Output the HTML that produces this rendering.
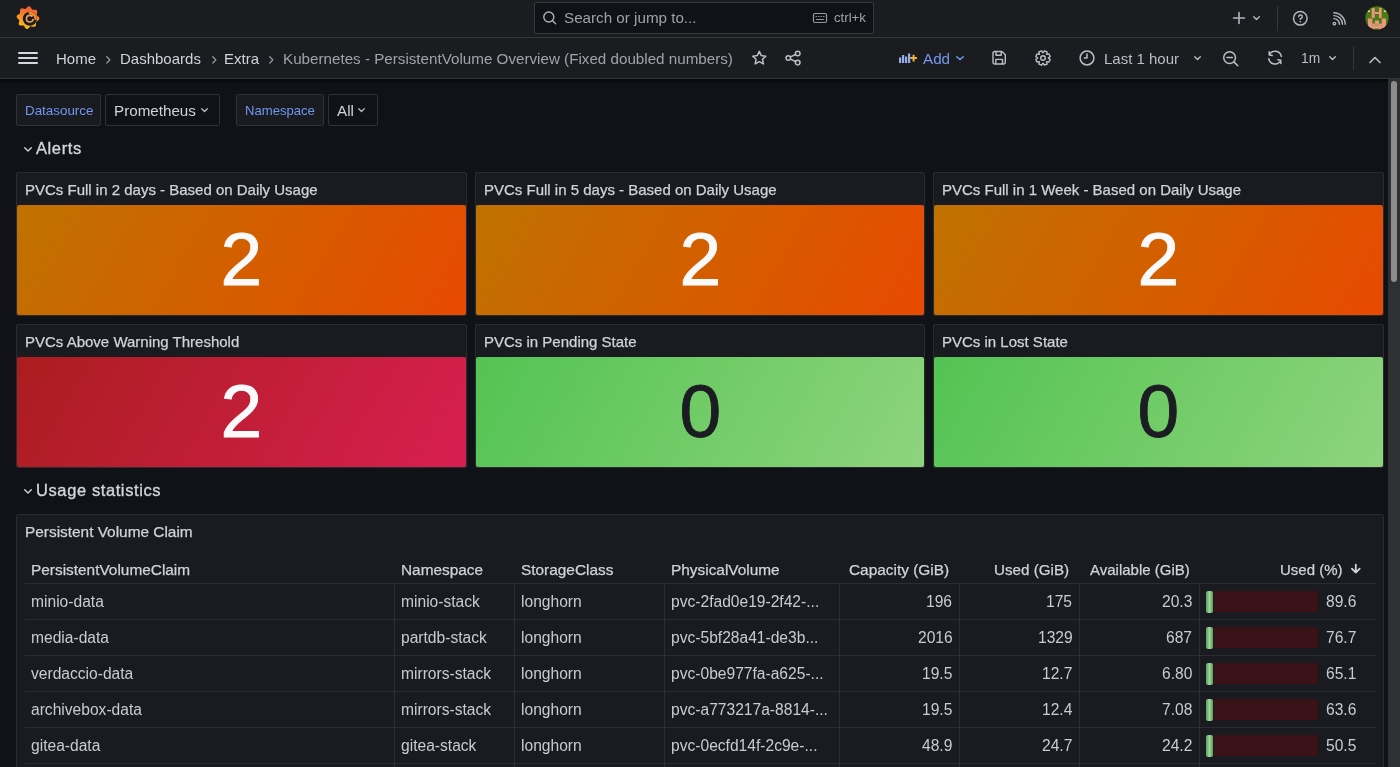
<!DOCTYPE html>
<html><head><meta charset="utf-8"><title>Kubernetes - PersistentVolume Overview</title><style>
*{box-sizing:border-box;margin:0;padding:0}
html,body{width:1400px;height:767px;overflow:hidden;background:#111217;font-family:"Liberation Sans",sans-serif;color:#ccccdc}
.a{position:absolute}
.t{position:absolute;white-space:nowrap;line-height:1;will-change:transform}
svg{position:absolute;overflow:visible}
.s{fill:none;stroke:#bdbdc7;stroke-width:1.5;stroke-linecap:round;stroke-linejoin:round}
.box{position:absolute;border:1px solid #2f3136;border-radius:2px}
.panel{position:absolute;background:#1a1b20;border:1px solid #2a2c31;border-radius:2px}
.hl{position:absolute;height:1px;background:#2a2d32}
.vl{position:absolute;width:1px;background:#2a2d32}
</style></head><body>
<div class="a" style="left:0;top:0;width:1400px;height:38px;background:#1a1c20;border-bottom:1px solid #34363b"></div>
<div class="a" style="left:0;top:38px;width:1400px;height:41px;background:#1a1c20;border-bottom:1px solid #34363b"></div>
<div class="a" style="left:0;top:79px;width:1400px;height:5px;background:linear-gradient(to bottom,#030408,#0a0b0f 40%,#111217)"></div>
<svg style="left:16px;top:5px" width="25" height="26" viewBox="0 0 25 26">
<defs><linearGradient id="lg" x1="0.1" y1="1" x2="0.3" y2="0"><stop offset="0" stop-color="#fcc419"/><stop offset="0.5" stop-color="#f8951f"/><stop offset="1" stop-color="#f15c34"/></linearGradient></defs>
<path fill="url(#lg)" d="M23.10 12.60 L23.35 13.19 L23.39 13.80 L23.19 14.37 L22.80 14.89 L22.25 15.35 L21.64 15.73 L21.04 16.07 L20.54 16.40 L20.17 16.76 L19.95 17.19 L19.88 17.72 L19.90 18.34 L19.94 19.03 L19.95 19.76 L19.85 20.45 L19.61 21.05 L19.21 21.50 L18.66 21.77 L18.01 21.86 L17.31 21.79 L16.60 21.63 L15.94 21.45 L15.35 21.32 L14.83 21.32 L14.38 21.47 L13.95 21.79 L13.53 22.24 L13.07 22.77 L12.56 23.28 L12.00 23.70 L11.41 23.95 L10.80 23.99 L10.23 23.79 L9.71 23.40 L9.25 22.85 L8.87 22.24 L8.53 21.64 L8.20 21.14 L7.84 20.77 L7.41 20.55 L6.88 20.48 L6.26 20.50 L5.57 20.54 L4.84 20.55 L4.15 20.45 L3.55 20.21 L3.10 19.81 L2.83 19.26 L2.74 18.61 L2.81 17.91 L2.97 17.20 L3.15 16.54 L3.28 15.95 L3.28 15.43 L3.13 14.98 L2.81 14.55 L2.36 14.13 L1.83 13.67 L1.32 13.16 L0.90 12.60 L0.65 12.01 L0.61 11.40 L0.81 10.83 L1.20 10.31 L1.75 9.85 L2.36 9.47 L2.96 9.13 L3.46 8.80 L3.83 8.44 L4.05 8.01 L4.12 7.48 L4.10 6.86 L4.06 6.17 L4.05 5.44 L4.15 4.75 L4.39 4.15 L4.79 3.70 L5.34 3.43 L5.99 3.34 L6.69 3.41 L7.40 3.57 L8.06 3.75 L8.65 3.88 L9.17 3.88 L9.62 3.73 L10.05 3.41 L10.47 2.96 L10.93 2.43 L11.44 1.92 L12.00 1.50 L12.59 1.25 L13.20 1.21 L13.77 1.41 L14.29 1.80 L14.75 2.35 L15.13 2.96 L15.47 3.56 L15.80 4.06 L16.16 4.43 L16.59 4.65 L17.12 4.72 L17.74 4.70 L18.43 4.66 L19.16 4.65 L19.85 4.75 L20.45 4.99 L20.90 5.39 L21.17 5.94 L21.26 6.59 L21.19 7.29 L21.03 8.00 L20.85 8.66 L20.72 9.25 L20.72 9.77 L20.87 10.22 L21.19 10.65 L21.64 11.07 L22.17 11.53 L22.68 12.04 Z"/>
<circle cx="13.8" cy="13.7" r="7" fill="#1a1c20"/>
<path fill="none" stroke="#f4872a" stroke-width="2.6" d="M13.8 8.1 A5.6 5.6 0 0 1 19.4 13.7" stroke-linecap="round"/>
<circle cx="13.8" cy="13.7" r="4.1" fill="#e9a06e"/>
<circle cx="13.8" cy="13.7" r="2.5" fill="#1a1c20"/>
<path fill="#1a1c20" d="M13.8 13.7 L17.5 10.8 L18.5 13.9 Z"/>
</svg>
<div class="box" style="left:534px;top:2px;width:340px;height:32px;background:#111217;border-color:#36383d"></div>
<svg style="left:542px;top:10px" width="16" height="16" viewBox="0 0 16 16"><circle class="s" cx="6.8" cy="7" r="5" style="stroke:#aeaeb8;stroke-width:1.4"/><path class="s" d="M10.6 10.8 L13.6 13.8" style="stroke:#aeaeb8;stroke-width:1.4"/></svg>
<div class="t" style="left:563.50px;top:10.13px;font-size:15.20px;color:#9fa0aa;">Search or jump to...</div>
<svg style="left:812px;top:12px" width="16" height="12" viewBox="0 0 16 12"><rect class="s" x="1.5" y="1.5" width="13" height="9" rx="1.5" style="stroke:#96969f;stroke-width:1.2"/><path class="s" d="M4 4.5h.6M6.5 4.5h.6M9 4.5h.6M11.5 4.5h.6M4.5 7.5h7" style="stroke:#96969f;stroke-width:1.1"/></svg>
<div class="t" style="left:833.50px;top:10.83px;font-size:13.20px;color:#9fa0aa;">ctrl+k</div>
<svg style="left:1233px;top:12px" width="12" height="12" viewBox="0 0 12 12"><path class="s" d="M6 0.5v11M0.5 6h11" style="stroke:#b4b4be;stroke-width:1.6"/></svg>
<svg style="left:1252.5px;top:16.0px" width="7" height="4" viewBox="0 0 7 4"><path class="s" d="M0.7 0.7 L3.50 3.50 L6.30 0.7" style="stroke:#b4b4be;stroke-width:1.4"/></svg>
<div class="a" style="left:1277px;top:6px;width:1px;height:25px;background:#35373c"></div>
<svg style="left:1291.5px;top:9.6px" width="17" height="17" viewBox="0 0 17 17"><circle class="s" cx="8.3" cy="8.3" r="6.8" style="stroke:#b4b4be"/><path class="s" d="M6.6 6.7 A1.8 1.8 0 1 1 8.3 8.6 V9.4" style="stroke:#b4b4be;stroke-width:1.4"/><circle cx="8.3" cy="11.6" r="0.85" fill="#b4b4be"/></svg>
<svg style="left:1332px;top:12px" width="14" height="14" viewBox="0 0 14 14"><path class="s" d="M1.8 6.6 A5.6 5.6 0 0 1 7.4 12.2M1.8 3.6 A8.6 8.6 0 0 1 10.4 12.2M1.8 0.8 A11.4 11.4 0 0 1 13.2 12.2" style="stroke:#b4b4be;stroke-width:1.4"/><circle class="s" cx="2.4" cy="11.6" r="1.3" style="stroke:#b4b4be;stroke-width:1.3"/></svg>
<svg style="left:1365px;top:6px" width="24" height="24" viewBox="0 0 24 24">
<defs><clipPath id="av"><circle cx="12" cy="12" r="11.7"/></clipPath></defs>
<g clip-path="url(#av)"><rect width="24" height="24" fill="#4d7a12"/>
<g fill="#ea9680">
<rect x="6.7" y="2" width="3" height="10"/><rect x="14" y="2" width="2.6" height="10"/><rect x="9.7" y="6" width="4.3" height="2"/>
<rect x="3" y="12.5" width="4.3" height="10"/><rect x="16.7" y="12.5" width="4.3" height="10"/>
<rect x="7.3" y="17.5" width="2.6" height="6"/><rect x="14" y="17.5" width="2.7" height="6"/>
<rect x="9.9" y="14.5" width="4.1" height="2.5"/><rect x="9.9" y="19.5" width="4.1" height="3"/>
</g>
<g fill="#b6a070"><rect x="9.9" y="17" width="4.1" height="2.5"/></g>
<g fill="#d6e6b8"><rect x="3" y="4.5" width="2" height="1.5"/><rect x="19" y="4.5" width="2" height="1.5"/></g>
</g></svg>
<div class="a" style="left:18px;top:52px;width:20px;height:2px;background:#d6d6de;border-radius:1px"></div>
<div class="a" style="left:18px;top:57px;width:20px;height:2px;background:#d6d6de;border-radius:1px"></div>
<div class="a" style="left:18px;top:62px;width:20px;height:2px;background:#d6d6de;border-radius:1px"></div>
<div class="t" style="left:55.50px;top:51.30px;font-size:15.00px;color:#d2d2da;">Home</div>
<svg style="left:105.5px;top:56.0px" width="6" height="9" viewBox="0 0 6 9"><path class="s" d="M0.8 0.8 L3.9 3.9 L0.8 7" style="stroke:#9b9ba5;stroke-width:1.3"/></svg>
<div class="t" style="left:119.50px;top:51.30px;font-size:15.00px;color:#d2d2da;">Dashboards</div>
<svg style="left:211.5px;top:56.0px" width="6" height="9" viewBox="0 0 6 9"><path class="s" d="M0.8 0.8 L3.9 3.9 L0.8 7" style="stroke:#9b9ba5;stroke-width:1.3"/></svg>
<div class="t" style="left:224.00px;top:51.30px;font-size:15.00px;color:#d2d2da;">Extra</div>
<svg style="left:269.0px;top:56.0px" width="6" height="9" viewBox="0 0 6 9"><path class="s" d="M0.8 0.8 L3.9 3.9 L0.8 7" style="stroke:#9b9ba5;stroke-width:1.3"/></svg>
<div class="t" style="left:282.50px;top:51.13px;font-size:15.20px;color:#a2a2ad;">Kubernetes - PersistentVolume Overview (Fixed doubled numbers)</div>
<svg style="left:750px;top:49px" width="19" height="18" viewBox="0 0 19 18"><path class="s" d="M9.3 2.4 L11.3 6.6 L15.8 7.2 L12.5 10.3 L13.4 14.9 L9.3 12.7 L5.2 14.9 L6.1 10.3 L2.8 7.2 L7.3 6.6 Z" style="stroke-width:1.5"/></svg>
<svg style="left:784px;top:50px" width="18" height="17" viewBox="0 0 18 17"><circle class="s" cx="4.3" cy="8" r="2.3"/><circle class="s" cx="13.7" cy="3.5" r="2.3"/><circle class="s" cx="13.7" cy="12.6" r="2.3"/><path class="s" d="M6.4 6.9 L11.6 4.5 M6.4 9.1 L11.6 11.5"/></svg>
<svg style="left:898px;top:52px" width="20" height="12" viewBox="0 0 20 12">
<g fill="#93aee8"><rect x="1" y="5.5" width="2.2" height="5.5"/><rect x="4" y="3" width="2.2" height="8"/><rect x="7" y="4.5" width="2.2" height="6.5"/><rect x="10" y="1.5" width="2.2" height="9.5"/></g>
<path d="M15.6 2.8v6.6M12.3 6.1h6.6" stroke="#f0b43a" stroke-width="2"/></svg>
<div class="t" style="left:922.50px;top:51.13px;font-size:15.20px;color:#7399ee;">Add</div>
<svg style="left:955.5px;top:56.0px" width="8" height="4" viewBox="0 0 8 4"><path class="s" d="M0.7 0.7 L4.00 3.50 L7.30 0.7" style="stroke:#7399ee;stroke-width:1.5"/></svg>
<svg style="left:991px;top:50px" width="16" height="16" viewBox="0 0 16 16"><path class="s" d="M2 3 Q2 1.5 3.5 1.5 H11 L14.3 4.8 V12.6 Q14.3 14 12.9 14 H3.5 Q2 14 2 12.6 Z M5 1.8 V5.2 H10.2 V1.8 M4.8 14 V9.4 H11.5 V14" style="stroke-width:1.4"/></svg>
<svg style="left:1035px;top:50px" width="16" height="16" viewBox="0 0 16 16"><path class="s" d="M13.39 8.28 L15.16 9.40 L14.05 12.08 L12.01 11.61 L11.61 12.01 L12.08 14.05 L9.40 15.16 L8.28 13.39 L7.72 13.39 L6.60 15.16 L3.92 14.05 L4.39 12.01 L3.99 11.61 L1.95 12.08 L0.84 9.40 L2.61 8.28 L2.61 7.72 L0.84 6.60 L1.95 3.92 L3.99 4.39 L4.39 3.99 L3.92 1.95 L6.60 0.84 L7.72 2.61 L8.28 2.61 L9.40 0.84 L12.08 1.95 L11.61 3.99 L12.01 4.39 L14.05 3.92 L15.16 6.60 L13.39 7.72 Z" style="stroke-width:1.4"/><circle class="s" cx="8" cy="8" r="2.3" style="stroke-width:1.4"/></svg>
<svg style="left:1078px;top:49px" width="18" height="18" viewBox="0 0 18 18"><circle class="s" cx="9" cy="9" r="6.9"/><path class="s" d="M9 5 V9 H6.4"/></svg>
<div class="t" style="left:1103.50px;top:51.30px;font-size:15.00px;color:#bdbdc7;">Last 1 hour</div>
<svg style="left:1193.5px;top:56.2px" width="7" height="4" viewBox="0 0 7 4"><path class="s" d="M0.7 0.7 L3.50 3.50 L6.30 0.7" style="stroke:#bdbdc7;stroke-width:1.35"/></svg>
<svg style="left:1222px;top:50px" width="18" height="18" viewBox="0 0 18 18"><circle class="s" cx="7.6" cy="7.6" r="5.9"/><path class="s" d="M11.9 11.9 L15.8 15.8 M4.9 7.6 H10.3"/></svg>
<svg style="left:1266px;top:49px" width="18" height="18" viewBox="0 0 18 18"><path class="s" d="M3.20 5.90 A6.4 6.4 0 0 1 15.30 7.49 M14.80 11.30 A6.4 6.4 0 0 1 2.70 9.71 M3.20 2.70 L3.20 5.90 L6.20 6.50 M14.80 14.50 L14.80 11.30 L11.80 10.70"/></svg>
<div class="t" style="left:1300.50px;top:52.32px;font-size:13.80px;color:#bdbdc7;">1m</div>
<svg style="left:1329.0px;top:56.2px" width="7" height="4" viewBox="0 0 7 4"><path class="s" d="M0.7 0.7 L3.50 3.50 L6.30 0.7" style="stroke:#bdbdc7;stroke-width:1.35"/></svg>
<div class="a" style="left:1353px;top:46px;width:1px;height:24px;background:#35373c"></div>
<svg style="left:1369px;top:56px" width="12" height="8" viewBox="0 0 12 8"><path class="s" d="M1 6.5 L6 1.5 L11 6.5" style="stroke-width:1.6"/></svg>
<div class="a" style="left:1388px;top:79px;width:12px;height:688px;background:#2f3031"></div>
<div class="a" style="left:1391px;top:81px;width:6px;height:201px;background:#8c8c8d;border-radius:3px"></div>
<div class="box" style="left:16px;top:94px;width:85px;height:32px;background:#1a1b20"></div>
<div class="t" style="left:24.50px;top:104.16px;font-size:13.40px;color:#6f98ee;">Datasource</div>
<div class="box" style="left:105px;top:94px;width:115px;height:32px;background:#111217"></div>
<div class="t" style="left:114.00px;top:103.13px;font-size:15.20px;color:#d2d2da;">Prometheus</div>
<svg style="left:200.6px;top:108.2px" width="7" height="4" viewBox="0 0 7 4"><path class="s" d="M0.7 0.7 L3.50 3.50 L6.30 0.7" style="stroke:#bdbdc7;stroke-width:1.25"/></svg>
<div class="box" style="left:236px;top:94px;width:88px;height:32px;background:#1a1b20"></div>
<div class="t" style="left:245.20px;top:104.41px;font-size:13.10px;color:#6f98ee;">Namespace</div>
<div class="box" style="left:328px;top:94px;width:50px;height:32px;background:#111217"></div>
<div class="t" style="left:336.50px;top:103.13px;font-size:15.20px;color:#d2d2da;">All</div>
<svg style="left:358.2px;top:108.2px" width="7" height="4" viewBox="0 0 7 4"><path class="s" d="M0.7 0.7 L3.50 3.50 L6.30 0.7" style="stroke:#bdbdc7;stroke-width:1.25"/></svg>
<svg style="left:24.0px;top:147.4px" width="8" height="4" viewBox="0 0 8 4"><path class="s" d="M0.7 0.7 L4.00 4.10 L7.30 0.7" style="stroke:#cdcdd6;stroke-width:1.4"/></svg>
<div class="t" style="left:35.50px;top:139.53px;font-size:16.50px;color:#d4d4dc;letter-spacing:0.6px;-webkit-text-stroke:0.35px #d4d4dc;">Alerts</div>
<div class="panel" style="left:16.00px;top:172px;width:450.67px;height:144px"></div>
<div class="a" style="left:17.00px;top:205px;width:448.67px;height:110px;background:linear-gradient(120deg,#bf7200,#e84a00);border-radius:2px"></div>
<div class="t" style="left:25.00px;top:182.30px;font-size:15.00px;color:#d2d2da;-webkit-text-stroke:0.25px #d2d2da;">PVCs Full in 2 days - Based on Daily Usage</div>
<div class="t" style="left:16.00px;width:450.67px;top:222.01px;font-size:75px;text-align:center;color:#fafafa;-webkit-text-stroke:0.9px #fafafa">2</div>
<div class="panel" style="left:474.67px;top:172px;width:450.67px;height:144px"></div>
<div class="a" style="left:475.67px;top:205px;width:448.67px;height:110px;background:linear-gradient(120deg,#bf7200,#e84a00);border-radius:2px"></div>
<div class="t" style="left:483.67px;top:182.30px;font-size:15.00px;color:#d2d2da;-webkit-text-stroke:0.25px #d2d2da;">PVCs Full in 5 days - Based on Daily Usage</div>
<div class="t" style="left:474.67px;width:450.67px;top:222.01px;font-size:75px;text-align:center;color:#fafafa;-webkit-text-stroke:0.9px #fafafa">2</div>
<div class="panel" style="left:933.33px;top:172px;width:450.67px;height:144px"></div>
<div class="a" style="left:934.33px;top:205px;width:448.67px;height:110px;background:linear-gradient(120deg,#bf7200,#e84a00);border-radius:2px"></div>
<div class="t" style="left:942.33px;top:182.30px;font-size:15.00px;color:#d2d2da;-webkit-text-stroke:0.25px #d2d2da;">PVCs Full in 1 Week - Based on Daily Usage</div>
<div class="t" style="left:933.33px;width:450.67px;top:222.01px;font-size:75px;text-align:center;color:#fafafa;-webkit-text-stroke:0.9px #fafafa">2</div>
<div class="panel" style="left:16.00px;top:324px;width:450.67px;height:144px"></div>
<div class="a" style="left:17.00px;top:357px;width:448.67px;height:110px;background:linear-gradient(120deg,#ab1d1f,#d81f50);border-radius:2px"></div>
<div class="t" style="left:25.00px;top:334.30px;font-size:15.00px;color:#d2d2da;-webkit-text-stroke:0.25px #d2d2da;">PVCs Above Warning Threshold</div>
<div class="t" style="left:16.00px;width:450.67px;top:374.01px;font-size:75px;text-align:center;color:#fafafa;-webkit-text-stroke:0.9px #fafafa">2</div>
<div class="panel" style="left:474.67px;top:324px;width:450.67px;height:144px"></div>
<div class="a" style="left:475.67px;top:357px;width:448.67px;height:110px;background:linear-gradient(120deg,#53c353,#8ed47c);border-radius:2px"></div>
<div class="t" style="left:483.67px;top:334.30px;font-size:15.00px;color:#d2d2da;-webkit-text-stroke:0.25px #d2d2da;">PVCs in Pending State</div>
<div class="t" style="left:474.67px;width:450.67px;top:374.01px;font-size:75px;text-align:center;color:#1c1d22;-webkit-text-stroke:0.9px #1c1d22">0</div>
<div class="panel" style="left:933.33px;top:324px;width:450.67px;height:144px"></div>
<div class="a" style="left:934.33px;top:357px;width:448.67px;height:110px;background:linear-gradient(120deg,#53c353,#8ed47c);border-radius:2px"></div>
<div class="t" style="left:942.33px;top:334.30px;font-size:15.00px;color:#d2d2da;-webkit-text-stroke:0.25px #d2d2da;">PVCs in Lost State</div>
<div class="t" style="left:933.33px;width:450.67px;top:374.01px;font-size:75px;text-align:center;color:#1c1d22;-webkit-text-stroke:0.9px #1c1d22">0</div>
<svg style="left:24.0px;top:489.4px" width="8" height="4" viewBox="0 0 8 4"><path class="s" d="M0.7 0.7 L4.00 4.10 L7.30 0.7" style="stroke:#cdcdd6;stroke-width:1.4"/></svg>
<div class="t" style="left:35.50px;top:481.53px;font-size:16.50px;color:#d4d4dc;letter-spacing:0.6px;-webkit-text-stroke:0.35px #d4d4dc;">Usage statistics</div>
<div class="panel" style="left:16px;top:514px;width:1368px;height:300px"></div>
<div class="t" style="left:25.00px;top:523.96px;font-size:15.40px;color:#d2d2da;-webkit-text-stroke:0.25px #d2d2da;">Persistent Volume Claim</div>
<div class="t" style="left:30.50px;top:561.96px;font-size:15.40px;color:#d2d2da;-webkit-text-stroke:0.25px #d2d2da;">PersistentVolumeClaim</div>
<div class="t" style="left:400.50px;top:561.96px;font-size:15.40px;color:#d2d2da;-webkit-text-stroke:0.25px #d2d2da;">Namespace</div>
<div class="t" style="left:520.50px;top:561.96px;font-size:15.40px;color:#d2d2da;-webkit-text-stroke:0.25px #d2d2da;">StorageClass</div>
<div class="t" style="left:670.50px;top:561.96px;font-size:15.40px;color:#d2d2da;-webkit-text-stroke:0.25px #d2d2da;">PhysicalVolume</div>
<div class="t" style="right:450.50px;top:561.96px;font-size:15.40px;color:#d2d2da;-webkit-text-stroke:0.25px #d2d2da;">Capacity (GiB)</div>
<div class="t" style="right:330.50px;top:562.13px;font-size:15.20px;color:#d2d2da;-webkit-text-stroke:0.25px #d2d2da;">Used (GiB)</div>
<div class="t" style="right:210.50px;top:562.30px;font-size:15.00px;color:#d2d2da;-webkit-text-stroke:0.25px #d2d2da;">Available (GiB)</div>
<div class="t" style="right:57.50px;top:562.30px;font-size:15.00px;color:#d2d2da;-webkit-text-stroke:0.25px #d2d2da;">Used (%)</div>
<svg style="left:1350px;top:563px" width="12" height="13" viewBox="0 0 12 13"><path class="s" d="M5.8 1.6 V9.6 M1.9 5.6 L5.8 9.6 L9.7 5.6" style="stroke:#d2d2da;stroke-width:1.8"/></svg>
<div class="hl" style="left:25px;top:583px;width:1351px"></div>
<div class="t" style="left:30.50px;top:593.79px;font-size:15.60px;color:#cacad2;">minio-data</div>
<div class="t" style="left:400.50px;top:593.79px;font-size:15.60px;color:#cacad2;">minio-stack</div>
<div class="t" style="left:520.50px;top:593.79px;font-size:15.60px;color:#cacad2;">longhorn</div>
<div class="t" style="left:670.50px;top:593.79px;font-size:15.60px;color:#cacad2;">pvc-2fad0e19-2f42-...</div>
<div class="t" style="right:447.50px;top:593.79px;font-size:15.60px;color:#cacad2;">196</div>
<div class="t" style="right:327.50px;top:593.79px;font-size:15.60px;color:#cacad2;">175</div>
<div class="t" style="right:207.50px;top:593.79px;font-size:15.60px;color:#cacad2;">20.3</div>
<div class="t" style="right:43.50px;top:593.79px;font-size:15.60px;color:#cacad2;">89.6</div>
<div class="a" style="left:1214px;top:591px;width:104px;height:21px;background:repeating-linear-gradient(90deg,#3a1218 0,#3a1218 7px,#2e1216 7px,#2e1216 8px)"></div>
<div class="a" style="left:1206px;top:591px;width:7px;height:22px;background:linear-gradient(90deg,#5a9e5a,#9ed69a 50%,#5a9e5a);border-radius:2px"></div>
<div class="hl" style="left:25px;top:619px;width:1351px"></div>
<div class="t" style="left:30.50px;top:629.79px;font-size:15.60px;color:#cacad2;">media-data</div>
<div class="t" style="left:400.50px;top:629.79px;font-size:15.60px;color:#cacad2;">partdb-stack</div>
<div class="t" style="left:520.50px;top:629.79px;font-size:15.60px;color:#cacad2;">longhorn</div>
<div class="t" style="left:670.50px;top:629.79px;font-size:15.60px;color:#cacad2;">pvc-5bf28a41-de3b...</div>
<div class="t" style="right:447.50px;top:629.79px;font-size:15.60px;color:#cacad2;">2016</div>
<div class="t" style="right:327.50px;top:629.79px;font-size:15.60px;color:#cacad2;">1329</div>
<div class="t" style="right:207.50px;top:629.79px;font-size:15.60px;color:#cacad2;">687</div>
<div class="t" style="right:43.50px;top:629.79px;font-size:15.60px;color:#cacad2;">76.7</div>
<div class="a" style="left:1214px;top:627px;width:104px;height:21px;background:repeating-linear-gradient(90deg,#3a1218 0,#3a1218 7px,#2e1216 7px,#2e1216 8px)"></div>
<div class="a" style="left:1206px;top:627px;width:7px;height:22px;background:linear-gradient(90deg,#5a9e5a,#9ed69a 50%,#5a9e5a);border-radius:2px"></div>
<div class="hl" style="left:25px;top:655px;width:1351px"></div>
<div class="t" style="left:30.50px;top:665.79px;font-size:15.60px;color:#cacad2;">verdaccio-data</div>
<div class="t" style="left:400.50px;top:665.79px;font-size:15.60px;color:#cacad2;">mirrors-stack</div>
<div class="t" style="left:520.50px;top:665.79px;font-size:15.60px;color:#cacad2;">longhorn</div>
<div class="t" style="left:670.50px;top:665.79px;font-size:15.60px;color:#cacad2;">pvc-0be977fa-a625-...</div>
<div class="t" style="right:447.50px;top:665.79px;font-size:15.60px;color:#cacad2;">19.5</div>
<div class="t" style="right:327.50px;top:665.79px;font-size:15.60px;color:#cacad2;">12.7</div>
<div class="t" style="right:207.50px;top:665.79px;font-size:15.60px;color:#cacad2;">6.80</div>
<div class="t" style="right:43.50px;top:665.79px;font-size:15.60px;color:#cacad2;">65.1</div>
<div class="a" style="left:1214px;top:663px;width:104px;height:21px;background:repeating-linear-gradient(90deg,#3a1218 0,#3a1218 7px,#2e1216 7px,#2e1216 8px)"></div>
<div class="a" style="left:1206px;top:663px;width:7px;height:22px;background:linear-gradient(90deg,#5a9e5a,#9ed69a 50%,#5a9e5a);border-radius:2px"></div>
<div class="hl" style="left:25px;top:691px;width:1351px"></div>
<div class="t" style="left:30.50px;top:701.79px;font-size:15.60px;color:#cacad2;">archivebox-data</div>
<div class="t" style="left:400.50px;top:701.79px;font-size:15.60px;color:#cacad2;">mirrors-stack</div>
<div class="t" style="left:520.50px;top:701.79px;font-size:15.60px;color:#cacad2;">longhorn</div>
<div class="t" style="left:670.50px;top:701.79px;font-size:15.60px;color:#cacad2;">pvc-a773217a-8814-...</div>
<div class="t" style="right:447.50px;top:701.79px;font-size:15.60px;color:#cacad2;">19.5</div>
<div class="t" style="right:327.50px;top:701.79px;font-size:15.60px;color:#cacad2;">12.4</div>
<div class="t" style="right:207.50px;top:701.79px;font-size:15.60px;color:#cacad2;">7.08</div>
<div class="t" style="right:43.50px;top:701.79px;font-size:15.60px;color:#cacad2;">63.6</div>
<div class="a" style="left:1214px;top:699px;width:104px;height:21px;background:repeating-linear-gradient(90deg,#3a1218 0,#3a1218 7px,#2e1216 7px,#2e1216 8px)"></div>
<div class="a" style="left:1206px;top:699px;width:7px;height:22px;background:linear-gradient(90deg,#5a9e5a,#9ed69a 50%,#5a9e5a);border-radius:2px"></div>
<div class="hl" style="left:25px;top:727px;width:1351px"></div>
<div class="t" style="left:30.50px;top:737.79px;font-size:15.60px;color:#cacad2;">gitea-data</div>
<div class="t" style="left:400.50px;top:737.79px;font-size:15.60px;color:#cacad2;">gitea-stack</div>
<div class="t" style="left:520.50px;top:737.79px;font-size:15.60px;color:#cacad2;">longhorn</div>
<div class="t" style="left:670.50px;top:737.79px;font-size:15.60px;color:#cacad2;">pvc-0ecfd14f-2c9e-...</div>
<div class="t" style="right:447.50px;top:737.79px;font-size:15.60px;color:#cacad2;">48.9</div>
<div class="t" style="right:327.50px;top:737.79px;font-size:15.60px;color:#cacad2;">24.7</div>
<div class="t" style="right:207.50px;top:737.79px;font-size:15.60px;color:#cacad2;">24.2</div>
<div class="t" style="right:43.50px;top:737.79px;font-size:15.60px;color:#cacad2;">50.5</div>
<div class="a" style="left:1214px;top:735px;width:104px;height:21px;background:repeating-linear-gradient(90deg,#3a1218 0,#3a1218 7px,#2e1216 7px,#2e1216 8px)"></div>
<div class="a" style="left:1206px;top:735px;width:7px;height:22px;background:linear-gradient(90deg,#5a9e5a,#9ed69a 50%,#5a9e5a);border-radius:2px"></div>
<div class="hl" style="left:25px;top:763px;width:1351px"></div>
<div class="vl" style="left:394px;top:584px;height:190px"></div>
<div class="vl" style="left:514px;top:584px;height:190px"></div>
<div class="vl" style="left:664px;top:584px;height:190px"></div>
<div class="vl" style="left:839px;top:584px;height:190px"></div>
<div class="vl" style="left:959px;top:584px;height:190px"></div>
<div class="vl" style="left:1079px;top:584px;height:190px"></div>
<div class="vl" style="left:1199px;top:584px;height:190px"></div>
</body></html>
